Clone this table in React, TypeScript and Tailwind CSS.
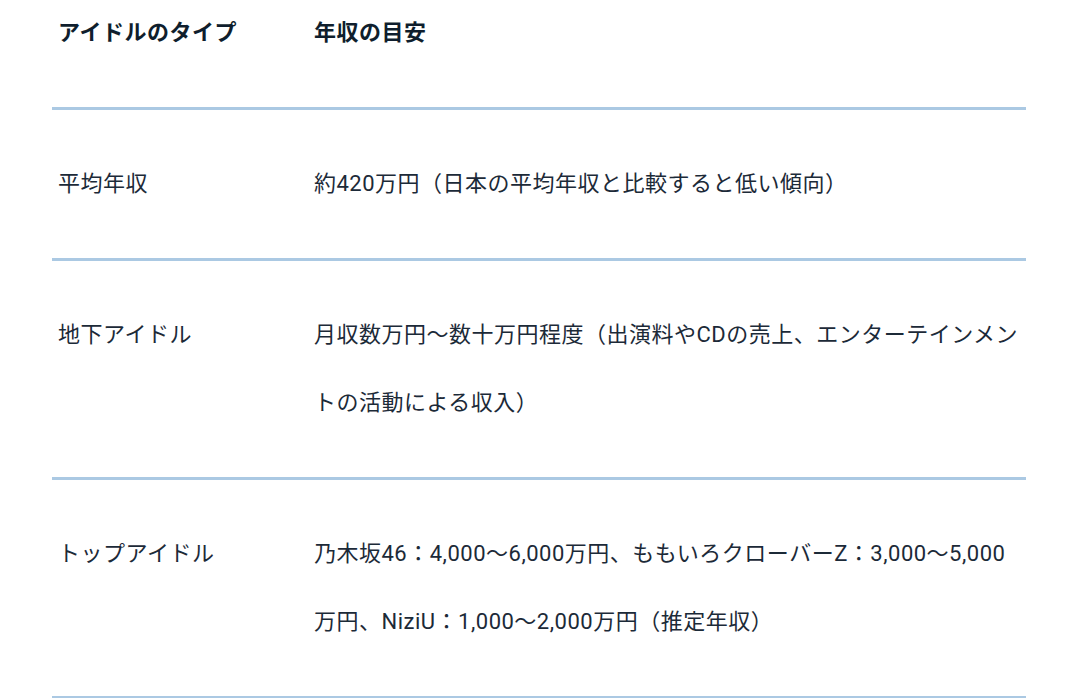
import React from "react";

const rows = [
  {
    type: "平均年収",
    income: "約420万円（日本の平均年収と比較すると低い傾向）",
  },
  {
    type: "地下アイドル",
    income:
      "月収数万円〜数十万円程度（出演料やCDの売上、エンターテインメントの活動による収入）",
  },
  {
    type: "トップアイドル",
    income:
      "乃木坂46：4,000〜6,000万円、ももいろクローバーZ：3,000〜5,000万円、NiziU：1,000〜2,000万円（推定年収）",
  },
];

export default function App() {
  return (
    <div className="w-full h-[698px] overflow-hidden bg-white font-['Roboto','Noto_Sans_CJK_JP',sans-serif] text-[#1c2a38] tracking-[0.5px]">
      <div className="ml-[52px] w-[974px] -mt-px">
        {/* header */}
        <div className="grid grid-cols-[262px_1fr] pb-[40px] border-b-[3px] border-[#abc9e3] text-[22px] leading-[68px] font-bold text-[#0f1e2d]">
          <div className="pl-[6px]">アイドルのタイプ</div>
          <div className="pr-[6px]">年収の目安</div>
        </div>

        {/* rows */}
        {rows.map((row) => (
          <div
            key={row.type}
            className="grid grid-cols-[262px_1fr] py-[40px] border-b-[3px] border-[#abc9e3] text-[22px] leading-[68px]"
          >
            <div className="pl-[6px]">{row.type}</div>
            <div className="pr-[4px]">{row.income}</div>
          </div>
        ))}
      </div>
    </div>
  );
}
